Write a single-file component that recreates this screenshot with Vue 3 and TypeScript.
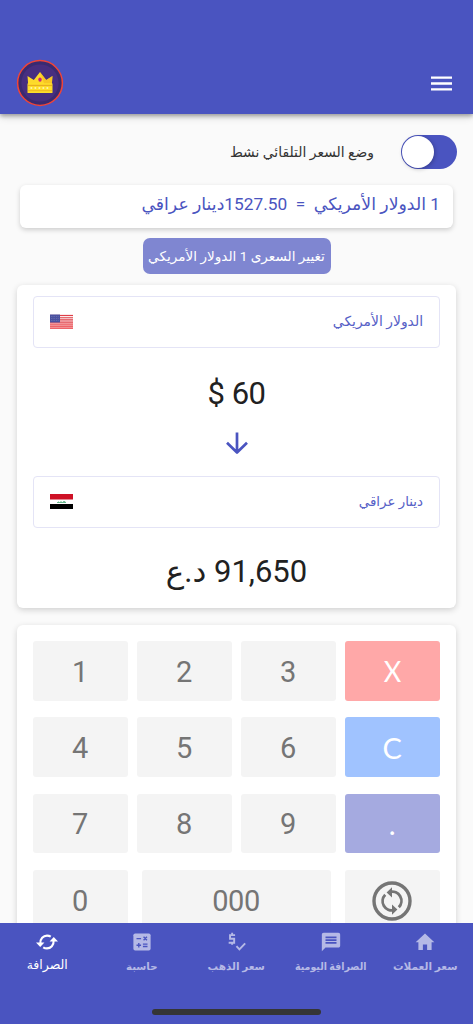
<script setup lang="ts">
import { ref } from 'vue'

interface Key {
  label: string
  kind?: 'clear' | 'reset' | 'point'
}

const keys: Key[] = [
  { label: '1' }, { label: '2' }, { label: '3' }, { label: 'X', kind: 'clear' },
  { label: '4' }, { label: '5' }, { label: '6' }, { label: 'C', kind: 'reset' },
  { label: '7' }, { label: '8' }, { label: '9' }, { label: '.', kind: 'point' },
]

const amount = ref('60')
const result = ref('91,650')
const autoRate = ref(true)
</script>

<template>
  <div class="screen">
    <header class="topbar">
      <svg class="logo" viewBox="0 0 48 48">
        <circle cx="24" cy="24" r="22.4" fill="#3a2a70" stroke="#ef4438" stroke-width="1.5" />
        <circle cx="24" cy="24" r="18.6" fill="#472e80" />
        <path d="M11.500 17l6.300 4L24 13l6.200 8 6.300-4-.8 10H12.300z" fill="#fdd92b" />
        <path d="M24 13l6.200 8 6.300-4-.8 10H29z" fill="#f3b91f" opacity=".6" />
        <ellipse cx="24" cy="20.600" rx="1.700" ry="2.200" fill="#c9247e" />
        <rect x="11.500" y="24.300" width="25" height="9.700" rx=".6" fill="#fede2a" />
        <rect x="12" y="25.800" width="24" height="1.300" fill="#e9ae1e" />
        <rect x="12" y="31.200" width="24" height="1" fill="#efb51e" />
        <path d="M14.500 29h19.500" stroke="#fff6c9" stroke-width="1.700" stroke-dasharray="1.700 2.300" />
      </svg>
      <svg class="menu" viewBox="0 0 21 15"><path d="M0 1.700h21M0 7.500h21M0 13.300h21" stroke="#fff" stroke-width="2.300" /></svg>
    </header>

    <main class="content">
      <div class="mode">
        <span class="ar mode-text">وضع السعر التلقائي نشط</span>
        <span class="switch" :class="{ on: autoRate }"><i></i></span>
      </div>

      <div class="rate"><span class="ar rate-text">1 الدولار الأمريكي&nbsp; =&nbsp; 1527.50دينار عراقي</span></div>

      <div class="change"><span class="ar change-text">تغيير السعرى 1 الدولار الأمريكي</span></div>

      <section class="card converter">
        <div class="select">
          <svg class="flag" viewBox="0 0 23 15">
            <rect width="23" height="15" fill="#fbe9ea" />
            <path d="M0 1.500h23M0 3.700h23M0 5.900h23M0 8.100h23" stroke="#df4048" stroke-width="1.150" />
            <path d="M0 9.500h23v5.500H0z" fill="#f2a0a3" />
            <path d="M0 10.200h23M0 12.300h23M0 14.400h23" stroke="#ee6469" stroke-width="1.250" />
            <rect y=".5" width="10" height="8" fill="#4a519f" />
            <path d="M1 2.500h8M1 4.500h8M1 6.500h8" stroke="#8085bd" stroke-width=".7" stroke-dasharray=".7 1" />
          </svg>
          <span class="ar usd">الدولار الأمريكي</span>
        </div>
        <div class="amount">$ {{ amount }}</div>
        <svg class="arrow" viewBox="0 0 24 24"><path d="M12 1.500v20M2 11.800l10 9.700 10-9.700" fill="none" stroke="#4a54c0" stroke-width="2.700" stroke-linejoin="round" /></svg>
        <div class="select">
          <svg class="flag" viewBox="0 0 23 15">
            <rect width="23" height="15" fill="#fff" />
            <rect width="23" height="5.500" fill="#ce1126" />
            <rect y="10" width="23" height="5" fill="#000" />
            <path d="M7 8.500h9M8.500 7.500v1M11 7v1.500M13 7.600h2v.9" fill="none" stroke="#4ba878" stroke-width=".8" />
          </svg>
          <span class="ar iqd">دينار عراقي</span>
        </div>
        <div class="result"><span class="ar result-text">{{ result }} <span class="unit">د.ع</span></span></div>
      </section>

      <section class="card keypad">
        <div class="keys">
          <button v-for="k in keys" :key="k.label" class="key" :class="k.kind"><span>{{ k.label }}</span></button>
        </div>
        <div class="lastrow">
          <button class="key"><span>0</span></button>
          <button class="key wide"><span>000</span></button>
          <button class="key swap">
            <svg viewBox="0 0 40 40" fill="none" stroke="#757575">
              <circle cx="20" cy="20" r="18" stroke-width="3.400" />
              <path d="M22 29.200A9.300 9.300 0 0 1 13.200 13.700" stroke-width="2.800" />
              <path d="M18 10.800A9.300 9.300 0 0 1 26.800 26.300" stroke-width="2.800" />
              <path d="M20 6.200v10.400l-5.400-5.200zM20 23.400v10.400l5.400-5.200z" fill="#757575" stroke="none" />
            </svg>
          </button>
        </div>
      </section>
    </main>

    <nav class="tabs">
      <div class="tab active">
        <svg viewBox="0 0 24 24" fill="none" stroke="#fff" stroke-width="2.300">
          <path d="M4.800 13.500C4.300 8.500 8 5 12 5c1.600 0 3 .4 4.100 1.100M19.200 10.500c.5 5-3.200 8.500-7.200 8.500-1.600 0-3-.4-4.100-1.100" />
          <path d="M0 12.500h9.200l-4.600 5zM14.800 11.500H24l-4.600-5z" fill="#fff" stroke="none" />
        </svg>
        <span class="ar t1">الصرافة</span>
      </div>
      <div class="tab">
        <svg viewBox="0 0 24 24">
          <rect x="2.600" y="2.600" width="18.800" height="18.800" rx="2" fill="#b5b9e6" />
          <path d="M6 8.300h5M13.700 6.300l3.700 3.700m0-3.700L13.700 10M6 15.500h5M8.500 13v5M13 14.300h5M13 16.900h5" stroke="#4a54c0" stroke-width="1.500" />
        </svg>
        <span class="ar t2">حاسبة</span>
      </div>
      <div class="tab">
        <svg viewBox="0 0 24 24" fill="none" stroke="#b5b9e6" stroke-width="2.100">
          <path d="M11 4.500H5.500v4H10v4.300H4M7.800 2v2.500M7.800 12.800V15M12.500 16.500l3.200 3.500 6.300-6.500" />
        </svg>
        <span class="ar t3">سعر الذهب</span>
      </div>
      <div class="tab">
        <svg viewBox="0 0 24 24"><path d="M20 2H4c-1.100 0-1.990.9-1.990 2L2 22l4-4h14c1.100 0 2-.9 2-2V4c0-1.100-.9-2-2-2zM6 9h12v2H6V9zm12 5H6v-2h12v2zm0-6H6V6h12v2z" fill="#b5b9e6" /></svg>
        <span class="ar t4">الصرافة اليومية</span>
      </div>
      <div class="tab">
        <svg viewBox="0 0 24 24"><path d="M9.700 20.700v-6h4.600v6h4.900v-8.500h3L12 2.600 1.800 12.200h3v8.500z" fill="#b5b9e6" /></svg>
        <span class="ar t5">سعر العملات</span>
      </div>
      <i class="home-bar"></i>
    </nav>
  </div>
</template>

<style>
html, body { margin: 0; overflow: hidden; background: #fafafa; }
</style>

<style scoped>
* { box-sizing: border-box; }
.screen {
  width: 473px; height: 1024px; display: flex; flex-direction: column; overflow: hidden;
  background: #fafafa; font-family: Roboto, "DejaVu Sans", sans-serif; color: #212121;
}
.ar { direction: rtl; white-space: nowrap; display: inline-block; flex: none; }
.topbar {
  flex: none; height: 114px; background: #4a54c0; padding: 59px 21px 0 16px; z-index: 1;
  display: flex; justify-content: space-between; align-items: flex-start;
  box-shadow: 0 2px 4px rgba(0, 0, 0, .3), 0 3px 8px rgba(0, 0, 0, .14);
}
.logo { width: 48px; height: 48px; }
.menu { width: 21px; height: 15px; margin-top: 17px; }
.content { flex: 1; min-height: 0; overflow: hidden; padding: 21px 17px 0; }
.mode { height: 34px; display: flex; justify-content: flex-end; align-items: center; gap: 27px; margin-right: -1px; }
.mode-text { font-size: 13.900px; color: #333; }
.switch { width: 56px; height: 34px; border-radius: 17px; background: #4a54c0; padding: 1px; display: flex; justify-content: flex-end; flex: none; }
.switch.on { justify-content: flex-start; }
.switch i { width: 32px; height: 32px; border-radius: 50%; background: #fff; box-shadow: 1px 1px 4px rgba(0, 0, 0, .25); }
.rate {
  height: 43px; margin: 16px 3px 0; padding: 0 13px 6px; border-radius: 6px; background: #fff;
  color: #4a54c0; font-size: 17.300px; display: flex; justify-content: flex-end; align-items: center;
  box-shadow: 0 2px 5px rgba(0, 0, 0, .18);
}
.change {
  width: 188px; height: 36px; margin: 10px 0 0 125.500px; border-radius: 7px; background: #7f86d1;
  color: #fff; font-size: 13.600px; display: flex; align-items: center; justify-content: center;
}
.card { background: #fff; border-radius: 6px; box-shadow: 0 2px 6px rgba(0, 0, 0, .17); padding: 0 16px; }
.converter { height: 323px; margin-top: 11px; padding-top: 11px; display: flex; flex-direction: column; align-items: center; }
.select {
  flex: none; width: 407px; height: 52px; border: 1px solid #e4e4f6; border-radius: 4px; padding: 0 16px 2px;
  display: flex; align-items: center; justify-content: space-between; color: #5660c6; font-size: 13.900px;
}
.iqd { font-size: 13.400px; }
.flag { width: 23px; height: 15px; }
.amount { height: 82px; line-height: 91px; font-size: 31px; letter-spacing: -.5px; }
.arrow { width: 24px; height: 24px; margin: 1px 0 21px; flex: none; }
.result { height: 80px; line-height: 87px; font-size: 31px; }
.keypad { height: 340px; margin-top: 17px; padding-top: 16px; }
.keys { display: grid; grid-template-columns: repeat(4, 95px); column-gap: 9px; row-gap: 16.500px; }
.key {
  width: 95px; height: 59.800px; border: 0; border-radius: 3px; background: #f4f4f4; color: #757575;
  font: 29px Roboto, sans-serif; letter-spacing: -.4px; padding: 2px 1px 0 0; display: flex; align-items: center; justify-content: center;
}
.key.clear, .key.reset, .key.point { color: #fff; font-family: Lato, sans-serif; padding-top: 0; }
.key.clear { background: #ffa8a8; }
.key.reset { background: #a0c3ff; }
.key.point { background: #a5aae0; }
.key.clear span { transform: scaleX(.93); }
.lastrow { display: flex; justify-content: space-between; margin-top: 16.500px; width: 407px; }
.key.wide { width: 189px; }
.swap svg { width: 40px; height: 40px; }
.tabs { flex: none; position: relative; z-index: 1; height: 101px; background: #4a54c0; display: grid; grid-template-columns: repeat(5, 94.500px); }
.tab { display: flex; flex-direction: column; align-items: center; padding-top: 8px; color: #b5b9e6; font-size: 10.500px; font-weight: bold; }
.tab svg { width: 22px; height: 22px; flex: none; }
.tab .ar { height: 24px; line-height: 24px; margin-top: 2px; }
.tab.active { color: #fff; font-size: 12.500px; font-weight: normal; }
.tab.active .ar { margin-top: 0; }
.tab .t2 { font-size: 10.200px; }
.tab .t4 { transform: scaleX(.9); }
.home-bar { position: absolute; left: 152px; bottom: 9px; width: 169px; height: 6px; border-radius: 3px; background: #353535; }
</style>
